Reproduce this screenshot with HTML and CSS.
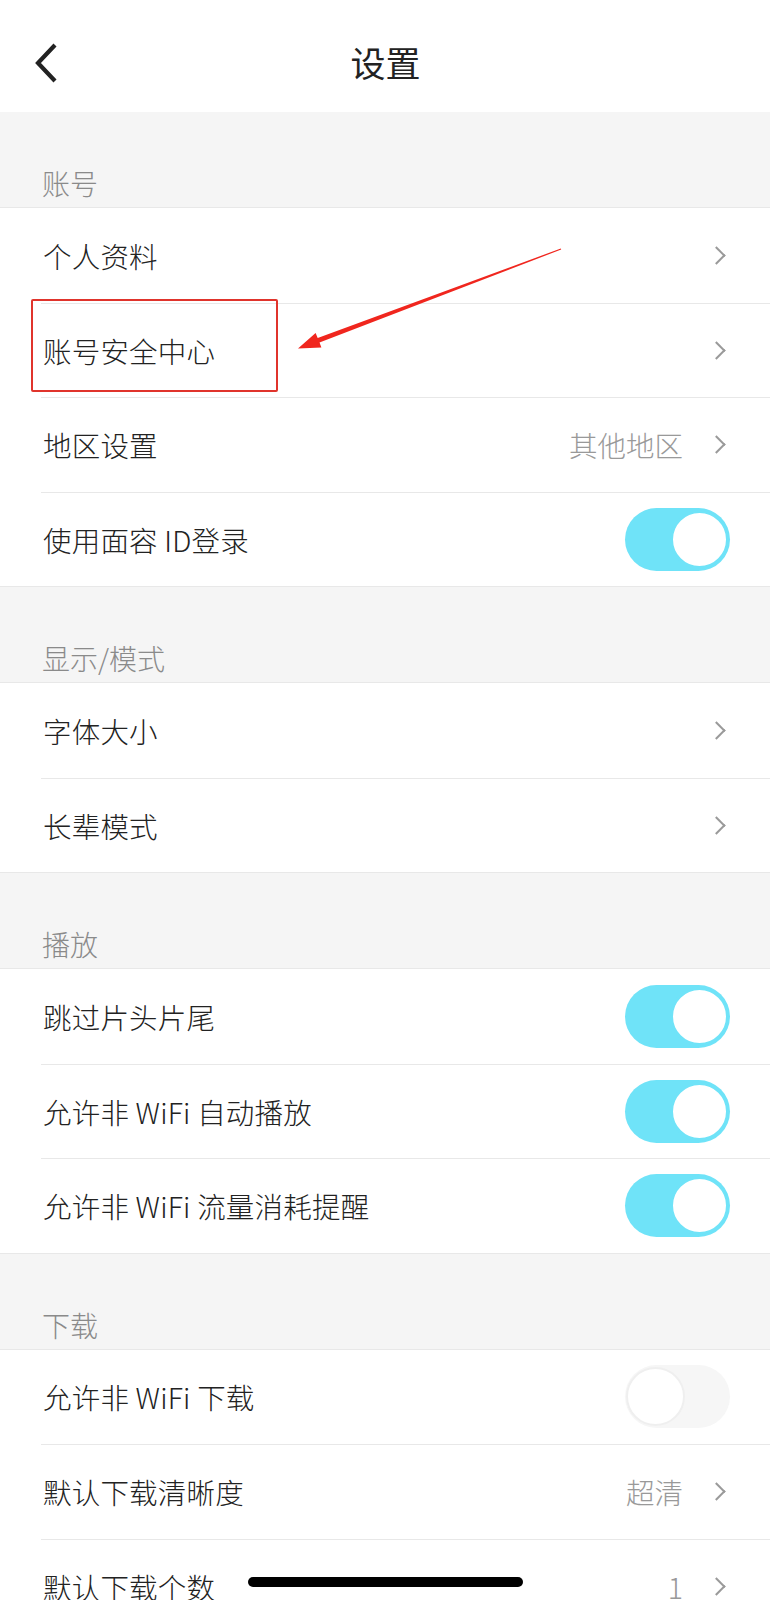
FILE: index.html
```html
<!DOCTYPE html>
<html lang="zh-CN">
<head>
    <meta charset="UTF-8">
    <meta name="viewport" content="width=device-width, initial-scale=1.0">
    <title>设置</title>
    <link rel="stylesheet" href="styles.css">
</head>
<body>

<div class="page">
    <header class="topbar">
        <a class="back" href="#">
            <svg width="26" height="42" viewBox="0 0 26 42"><path d="M22 3 L5 21 L22 39" fill="none" stroke="#222" stroke-width="4.2"/></svg>
        </a>
        <h1>设置</h1>
        <span></span>
    </header>

    <div class="section-title">账号</div>
    <div class="list">
        <div class="row"><span class="label">个人资料</span><span class="chevron"></span></div>
        <div class="row"><span class="label">账号安全中心</span><span class="chevron"></span></div>
        <div class="row"><span class="label">地区设置</span><span class="value">其他地区</span><span class="chevron"></span></div>
        <div class="row"><span class="label">使用面容 ID登录</span><span class="toggle on"><i></i></span></div>
    </div>

    <div class="section-title">显示/模式</div>
    <div class="list">
        <div class="row"><span class="label">字体大小</span><span class="chevron"></span></div>
        <div class="row"><span class="label">长辈模式</span><span class="chevron"></span></div>
    </div>

    <div class="section-title">播放</div>
    <div class="list">
        <div class="row"><span class="label">跳过片头片尾</span><span class="toggle on"><i></i></span></div>
        <div class="row"><span class="label">允许非 WiFi 自动播放</span><span class="toggle on"><i></i></span></div>
        <div class="row"><span class="label">允许非 WiFi 流量消耗提醒</span><span class="toggle on"><i></i></span></div>
    </div>

    <div class="section-title">下载</div>
    <div class="list">
        <div class="row"><span class="label">允许非 WiFi 下载</span><span class="toggle"><i></i></span></div>
        <div class="row"><span class="label">默认下载清晰度</span><span class="value">超清</span><span class="chevron"></span></div>
        <div class="row"><span class="label">默认下载个数</span><span class="value">1</span><span class="chevron"></span></div>
    </div>

    <!-- screenshot markup -->
    <div class="mark-box"></div>
    <svg class="mark-arrow" width="770" height="400" viewBox="0 0 770 400">
        <polygon points="560.8,248.5 317.7,338 315.6,333 298,348.5 321.4,347.4 319.5,342.6 561.2,249.5" fill="#f0261e"/>
    </svg>

    <div class="home-bar"></div>
</div>

</body>
</html>
```

FILE: styles.css
```css
body {
    margin: 0;
    padding: 0;
    background-color: #f5f5f5;
    color: #222;
    font-family: 'Noto Sans CJK SC', 'Noto Sans', sans-serif;
}

.page {
    position: relative;
    width: 770px;
}

/* Top bar */
.topbar {
    height: 112px;
    background-color: #fff;
    display: grid;
    grid-template-columns: 1fr auto 1fr;
    align-items: center;
}

.back {
    display: flex;
    padding-left: 33px;
    margin-top: 14px;
}

.topbar h1 {
    margin: 10px 0 0 1px;
    font-size: 35px;
    font-weight: 400;
    color: #222;
}

/* Sections */
.section-title {
    height: 96px;
    box-sizing: border-box;
    display: flex;
    align-items: flex-end;
    padding: 0 0 4px 42px;
    font-size: 28px;
    font-weight: 300;
    color: #8a8a8a;
    border-bottom: 1px solid #e8e8e8;
}

.list {
    background-color: #fff;
    padding-left: 41px;
    border-bottom: 1px solid #e8e8e8;
}

.row {
    height: 94.5px;
    box-sizing: border-box;
    display: flex;
    align-items: center;
    padding: 0 40px 0 2px;
    border-top: 1px solid #e8e8e8;
    font-size: 28.5px;
    font-weight: 300;
}

.row:first-child {
    border-top: none;
}

.label {
    flex: 1;
    white-space: nowrap;
    letter-spacing: 0.2px;
}

.value {
    color: #999;
    margin-right: 27px;
}

.chevron {
    width: 11px;
    height: 11px;
    border-top: 2.4px solid #9a9a9a;
    border-right: 2.4px solid #9a9a9a;
    transform: rotate(45deg);
    margin-right: 7px;
}

/* Switches */
.toggle {
    width: 105px;
    height: 63px;
    box-sizing: border-box;
    border-radius: 32px;
    background-color: #f6f6f6;
    display: flex;
    align-items: center;
    justify-content: flex-start;
    padding: 1px;
}

.toggle i {
    width: 59px;
    height: 59px;
    box-sizing: border-box;
    border-radius: 50%;
    background-color: #fff;
    border: 2px solid #efefef;
}

.toggle.on {
    background-color: #6fe3f8;
    justify-content: flex-end;
}

.toggle.on i {
    border: 3px solid #6fe3f8;
}

/* Annotation drawn over the screenshot */
.mark-box {
    position: absolute;
    left: 31px;
    top: 299px;
    width: 247px;
    height: 93px;
    box-sizing: border-box;
    border: 2px solid #e0342c;
    border-radius: 2px;
}

.mark-arrow {
    position: absolute;
    left: 0;
    top: 0;
}

.home-bar {
    position: absolute;
    left: 248px;
    top: 1577px;
    width: 275px;
    height: 10px;
    border-radius: 5px;
    background-color: #000;
}
```
